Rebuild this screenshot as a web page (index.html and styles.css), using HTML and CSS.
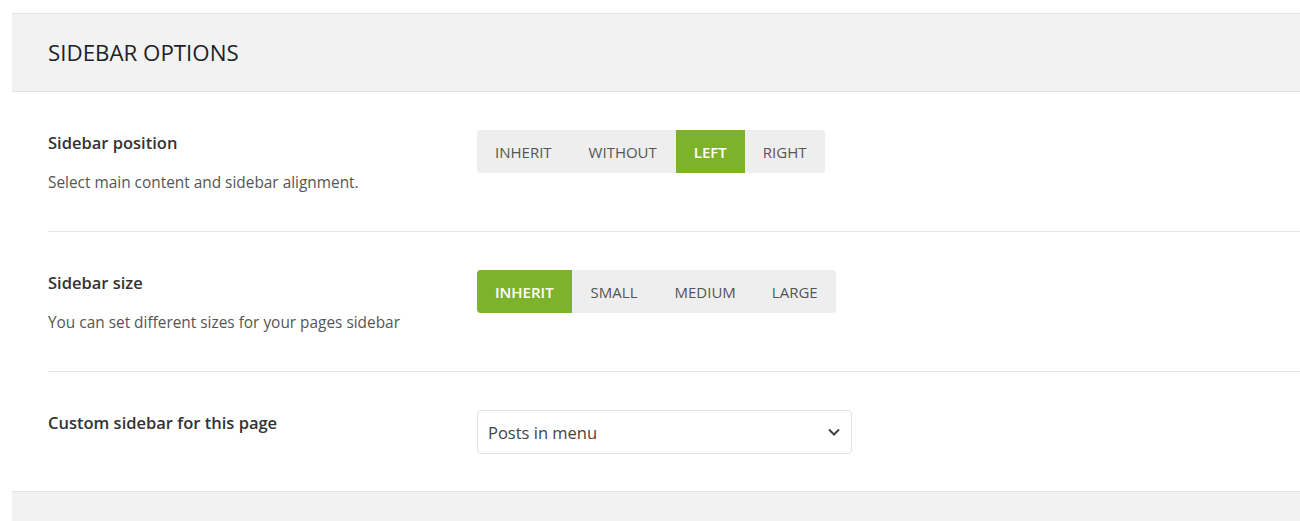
FILE: index.html
```html
<!DOCTYPE html>
<html lang="en">
<head>
    <meta charset="UTF-8">
    <title>Sidebar Options</title>
    <link rel="stylesheet" href="styles.css">
</head>
<body>

<div class="panel">
    <div class="panel-header">
        <h2>Sidebar Options</h2>
    </div>

    <div class="panel-body">
        <div class="option-row">
            <div class="option-info">
                <label>Sidebar position</label>
                <p>Select main content and sidebar alignment.</p>
            </div>
            <div class="btn-group">
                <button type="button">Inherit</button>
                <button type="button">Without</button>
                <button type="button" class="active">Left</button>
                <button type="button">Right</button>
            </div>
        </div>

        <div class="option-row">
            <div class="option-info">
                <label>Sidebar size</label>
                <p>You can set different sizes for your pages sidebar</p>
            </div>
            <div class="btn-group">
                <button type="button" class="active">Inherit</button>
                <button type="button">Small</button>
                <button type="button">Medium</button>
                <button type="button">Large</button>
            </div>
        </div>

        <div class="option-row last">
            <div class="option-info">
                <label for="customSidebar">Custom sidebar for this page</label>
            </div>
            <div class="select-wrap">
                <select id="customSidebar">
                    <option>Posts in menu</option>
                    <option>Default sidebar</option>
                </select>
                <svg class="chevron" width="14" height="10" viewBox="0 0 14 10">
                    <polyline points="2,2.5 7,7.5 12,2.5" fill="none" stroke="#444" stroke-width="2"/>
                </svg>
            </div>
        </div>
    </div>

    <div class="panel-footer"></div>
</div>

</body>
</html>
```

FILE: styles.css
```css
body {
    font-family: 'Open Sans', 'Noto Sans', sans-serif;
    background-color: #ffffff;
    margin: 0;
    padding: 0;
    color: #333;
}
.panel {
    padding: 13px 0 0 12px;
}
.panel-header {
    background-color: #f2f2f2;
    border-top: 1px solid #e4e4e4;
    border-bottom: 1px solid #e4e4e4;
    height: 77px;
    padding-left: 36px;
    display: flex;
    align-items: center;
}
.panel-header h2 {
    margin: 0;
    font-size: 22.3px;
    font-weight: 500;
    text-transform: uppercase;
    color: #1d2327;
}
.panel-body {
    padding-left: 36px;
}
.option-row {
    display: flex;
    height: 140px;
    box-sizing: border-box;
    padding-top: 38px;
    border-bottom: 1px solid #e5e5e5;
}
.option-row.last {
    height: 119px;
    border-bottom: none;
}
.option-info {
    width: 429px;
    flex-shrink: 0;
}
.option-info label {
    display: block;
    font-size: 16.5px;
    font-weight: 600;
    color: #333;
    margin-top: 1px;
}
.option-info p {
    margin: 18px 0 0;
    font-size: 15.4px;
    color: #555;
}
.btn-group {
    display: flex;
    height: 43px;
    background-color: #eeeeee;
    border-radius: 4px;
    overflow: hidden;
}
.btn-group button {
    font-family: inherit;
    font-size: 15px;
    text-transform: uppercase;
    color: #555;
    background: none;
    border: none;
    padding: 0 18px;
    cursor: pointer;
}
.btn-group button:nth-child(2) {
    padding: 0 19px;
}
.btn-group button.active {
    background-color: #7cb32b;
    color: #ffffff;
    font-weight: 600;
}
.select-wrap {
    position: relative;
    width: 375px;
    height: 44px;
}
.select-wrap select {
    width: 100%;
    height: 100%;
    appearance: none;
    -webkit-appearance: none;
    border: 1px solid #e2e2e2;
    border-radius: 4px;
    background-color: #ffffff;
    font-family: inherit;
    font-size: 16.5px;
    color: #444;
    padding: 0 10px;
}
.chevron {
    position: absolute;
    right: 11px;
    top: 17px;
    pointer-events: none;
}
.panel-footer {
    background-color: #f2f2f2;
    border-top: 1px solid #e4e4e4;
    height: 40px;
}
```
